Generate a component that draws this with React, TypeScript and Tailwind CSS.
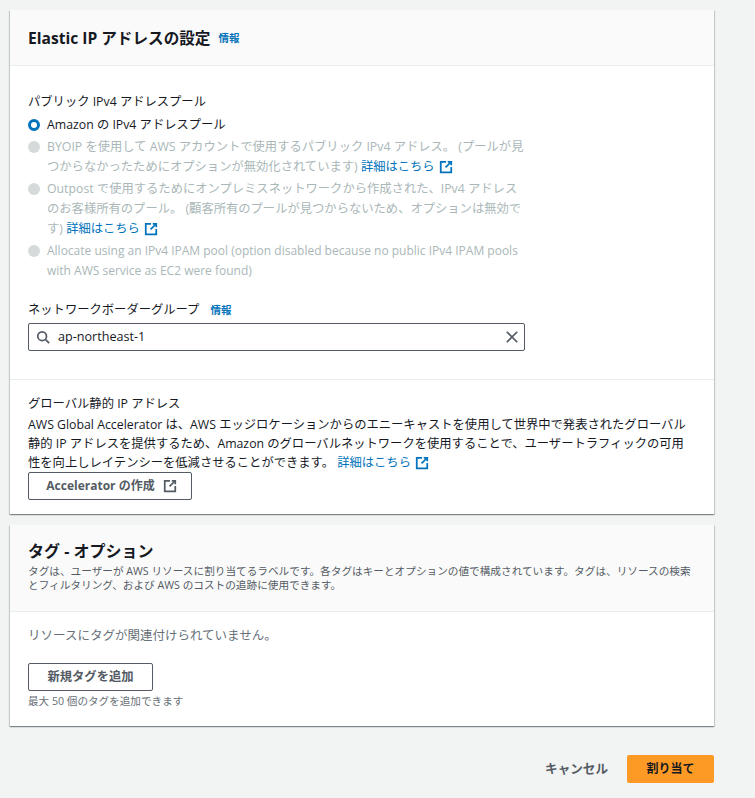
import React from "react";

const font = "font-['Open_Sans','Noto_Sans_CJK_JP',sans-serif]";
const cardShadow = "shadow-[0_1px_1px_0_rgba(0,28,36,0.3),1px_1px_1px_0_rgba(0,28,36,0.15),-1px_1px_1px_0_rgba(0,28,36,0.15)]";

function ExternalIcon({ className }: { className: string }) {
  return (
    <svg viewBox="0 0 16 16" fill="none" stroke="currentColor" strokeWidth="2" className={className}>
      <path d="M8 2H2v12h12V8" />
      <path d="M10 2h4v4" />
      <path d="M14 2 7.5 8.5" />
    </svg>
  );
}

function Learn() {
  return (
    <span className="text-[#0073bb]">
      詳細はこちら
      <ExternalIcon className="inline-block w-[14px] h-[14px] ml-[4px] mb-[1px]" />
    </span>
  );
}

function Option({ checked, children }: { checked?: boolean; children: React.ReactNode }) {
  return (
    <div className="flex mb-[2px]">
      <div className="w-[12px] h-[20px] flex items-center shrink-0 mr-[7px]">
        {checked ? (
          <div className="w-[12px] h-[12px] rounded-full border-[3.5px] border-[#0073bb] bg-white" />
        ) : (
          <div className="w-[12px] h-[12px] rounded-full bg-[#d5dbdb]" />
        )}
      </div>
      <div className={checked ? "text-[#16191f]" : "text-[#aab7b8]"}>{children}</div>
    </div>
  );
}

export default function App() {
  return (
    <div className={`${font} bg-[#f2f3f3] h-[798px] w-[755px] overflow-hidden pt-[10px] pl-[10px] text-[12.3px] leading-[20px] text-[#16191f]`}>
      <div className={`w-[704px] bg-white ${cardShadow}`}>
        <div className="h-[56px] bg-[#fafafa] border-b border-[#eaeded] px-[18px] flex items-center">
          <span className="text-[15.6px] font-bold">Elastic IP アドレスの設定</span>
          <span className="text-[10.5px] font-bold text-[#0073bb] ml-[8px] mt-[1px]">情報</span>
        </div>

        <div className="pt-[26px] px-[18px] pb-[28px] border-b border-[#eaeded]">
          <div className="w-[497px]">
            <div className="mb-[3px]">パブリック IPv4 アドレスプール</div>
            <Option checked>Amazon の IPv4 アドレスプール</Option>
            <Option>
              BYOIP を使用して AWS アカウントで使用するパブリック IPv4 アドレス。 (プールが見つからなかったためにオプションが無効化されています) <Learn />
            </Option>
            <Option>
              Outpost で使用するためにオンプレミスネットワークから作成された、IPv4 アドレスのお客様所有のプール。 (顧客所有のプールが見つからないため、オプションは無効です) <Learn />
            </Option>
            <Option>
              <span className="text-[12px]">
                Allocate using an IPv4 IPAM pool (option disabled because no public IPv4 IPAM pools with AWS service as EC2 were found)
              </span>
            </Option>
            <div className="mt-[19px] mb-[3px] flex items-center">
              ネットワークボーダーグループ
              <span className="text-[10.5px] font-bold text-[#0073bb] ml-[11px]">情報</span>
            </div>
            <div className="h-[28px] border border-[#545b64] rounded-[2px] flex items-center pl-[7px] pr-[5px] text-[12.6px]">
              <svg viewBox="0 0 16 16" fill="none" stroke="#545b64" strokeWidth="2" className="w-[14px] h-[14px] mr-[8px]">
                <circle cx="7" cy="7" r="5" />
                <path d="m11 11 4 4" />
              </svg>
              <span className="flex-1">ap-northeast-1</span>
              <svg viewBox="0 0 16 16" fill="none" stroke="#545b64" strokeWidth="2" className="w-[14px] h-[14px]">
                <path d="m2 2 12 12M14 2 2 14" />
              </svg>
            </div>
          </div>
        </div>

        <div className="pt-[14px] px-[18px] pb-[14px]">
          <div>グローバル静的 IP アドレス</div>
          <div className="mt-[1px] leading-[19px]">
            AWS Global Accelerator は、AWS エッジロケーションからのエニーキャストを使用して世界中で発表されたグローバル静的 IP アドレスを提供するため、Amazon のグローバルネットワークを使用することで、ユーザートラフィックの可用性を向上しレイテンシーを低減させることができます。 <Learn />
          </div>
          <div className="w-[164px] h-[28px] pl-[3px] border border-[#545b64] rounded-[2px] flex items-center justify-center font-bold text-[#545b64] text-[12px]">
            Accelerator の作成
            <ExternalIcon className="w-[14px] h-[14px] ml-[8px]" />
          </div>
        </div>
      </div>

      <div className={`w-[704px] mt-[11px] bg-white ${cardShadow}`}>
        <div className="h-[87px] bg-[#fafafa] border-b border-[#eaeded] px-[18px] pt-[14px]">
          <div className="text-[16px] font-bold leading-[25px]">タグ - オプション</div>
          <div className="text-[10.65px] leading-[14px] text-[#545b64]">
            タグは、ユーザーが AWS リソースに割り当てるラベルです。各タグはキーとオプションの値で構成されています。タグは、リソースの検索とフィルタリング、および AWS のコストの追跡に使用できます。
          </div>
        </div>
        <div className="pt-[14px] px-[18px] pb-[16px]">
          <div className="text-[#687078] text-[12.5px]">リソースにタグが関連付けられていません。</div>
          <div className="mt-[17px] w-[125px] h-[28px] border border-[#545b64] rounded-[2px] flex items-center justify-center font-bold text-[#545b64] text-[12.3px]">
            新規タグを追加
          </div>
          <div className="mt-[1px] text-[10.6px] leading-[18px] text-[#687078]">最大 50 個のタグを追加できます</div>
        </div>
      </div>

      <div className="w-[704px] mt-[29px] flex justify-end items-center">
        <span className="font-bold text-[#545b64] text-[12.6px]">キャンセル</span>
        <div className="ml-[19px] w-[87px] h-[28px] bg-[#fd9a26] rounded-[2px] flex items-center justify-center font-bold text-[12px]">
          割り当て
        </div>
      </div>
    </div>
  );
}
